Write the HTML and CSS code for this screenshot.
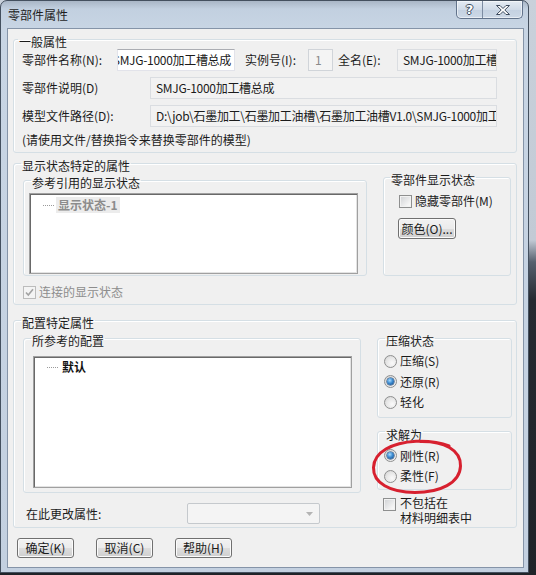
FILE: index.html
```html
<!DOCTYPE html>
<html lang="zh-CN">
<head>
<meta charset="utf-8">
<title>零部件属性</title>
<link rel="stylesheet" href="styles.css">
</head>
<body>
<div class="screen">
  <div class="win">
    <div class="titlebar">
      <span class="title">零部件属性</span>
      <div class="caps">
        <span class="cap cap-help">?</span>
        <span class="cap cap-close">
          <svg width="16" height="12" viewBox="0 0 16 12"><path d="M1.5 1.5h3.5l3 3 3-3h3.5l-4.7 4.5 4.7 4.5h-3.5l-3-3-3 3h-3.5l4.7-4.5z" fill="#fff" stroke="#3d4b5e" stroke-width="1" stroke-linejoin="round"/></svg>
        </span>
      </div>
    </div>
    <div class="client">
      <fieldset class="grp g1">
        <legend>一般属性</legend>
        <div class="row r1">
          <span class="lbl w-name">零部件名称(N):</span>
          <div class="tb tb-edit tb-name"><span>SMJG-1000加工槽总成</span></div>
          <span class="lbl w-inst">实例号(I):</span>
          <div class="tb tb-dis tb-inst">1</div>
          <span class="lbl w-full">全名(E):</span>
          <div class="tb tb-ro tb-flex">SMJG-1000加工槽总成</div>
        </div>
        <div class="row r2">
          <span class="lbl w-long">零部件说明(D)</span>
          <div class="tb tb-ro tb-flex">SMJG-1000加工槽总成</div>
        </div>
        <div class="row r3">
          <span class="lbl w-long">模型文件路径(D):</span>
          <div class="tb tb-ro tb-flex">D:\job\石墨加工\石墨加工油槽\石墨加工油槽V1.0\SMJG-1000加工槽总成.SLDASM</div>
        </div>
        <div class="note">(请使用文件/替换指令来替换零部件的模型)</div>
      </fieldset>

      <fieldset class="grp g2">
        <legend>显示状态特定的属性</legend>
        <div class="g2-cols">
          <fieldset class="sub sub-disp">
            <legend>参考引用的显示状态</legend>
            <div class="listbox lb-disp">
              <div class="tree-item"><span class="dots"></span><span class="item-text item-dis">显示状态-1</span></div>
            </div>
          </fieldset>
          <fieldset class="sub sub-comp">
            <legend>零部件显示状态</legend>
            <div class="opt">
              <span class="chk"></span><span>隐藏零部件(M)</span>
            </div>
            <button class="btn btn-color" type="button">颜色(O)...</button>
          </fieldset>
        </div>
        <div class="opt opt-link dis">
          <span class="chk chk-dis"><svg width="11" height="11" viewBox="0 0 11 11"><path d="M2 5.5l2.3 2.6L9 2.2" fill="none" stroke="#a3a3a3" stroke-width="1.6"/></svg></span><span>连接的显示状态</span>
        </div>
      </fieldset>

      <fieldset class="grp g3">
        <legend>配置特定属性</legend>
        <div class="g3-grid">
          <div class="g3-left">
            <fieldset class="sub sub-conf">
              <legend>所参考的配置</legend>
              <div class="listbox lb-conf">
                <div class="tree-item"><span class="dots"></span><span class="item-text item-bold">默认</span></div>
              </div>
            </fieldset>
            <div class="change-row">
              <span class="lbl w-change">在此更改属性:</span>
              <div class="combo"><svg width="7" height="4" viewBox="0 0 7 4"><path d="M0 0h7L3.5 4z" fill="#b4b4b4"/></svg></div>
            </div>
          </div>
          <div class="g3-right">
            <fieldset class="sub sub-supp">
              <legend>压缩状态</legend>
              <div class="opt rad-row"><span class="rad"></span><span>压缩(S)</span></div>
              <div class="opt rad-row"><span class="rad on"></span><span>还原(R)</span></div>
              <div class="opt rad-row"><span class="rad"></span><span>轻化</span></div>
            </fieldset>
            <fieldset class="sub sub-solve">
              <legend>求解为</legend>
              <div class="solve-opts">
                <div class="opt rad-row"><span class="rad on"></span><span>刚性(R)</span></div>
                <div class="opt rad-row"><span class="rad"></span><span>柔性(F)</span></div>
                <svg class="mark" width="96" height="58" viewBox="0 0 96 58"><path d="M50 3.5C74 3 91 12 90.5 28 90 45 70 54.5 45 54.5 20 54.5 3 45 3.5 29.5 4 14 22 4.5 46 3.2 60 2.8 72 5 79 8" fill="none" stroke="#d7202f" stroke-width="3" stroke-linecap="round"/></svg>
              </div>
            </fieldset>
            <div class="opt opt-bom">
              <span class="chk"></span><span class="bom-text">不包括在<br>材料明细表中</span>
            </div>
          </div>
        </div>
      </fieldset>

      <div class="btn-row">
        <button class="btn" type="button">确定(K)</button>
        <button class="btn" type="button">取消(C)</button>
        <button class="btn" type="button">帮助(H)</button>
      </div>
    </div>
  </div>
</div>
</body>
</html>
```

FILE: styles.css
```css
* { box-sizing: border-box; }
html, body { margin: 0; padding: 0; }
body {
  font-family: "Noto Sans CJK SC", "Microsoft YaHei", sans-serif;
  font-size: 12px;
  color: #1b1b1b;
  background: #22262c;
}
.screen {
  width: 536px;
  height: 575px;
  overflow: hidden;
  background: linear-gradient(to bottom, #c9d1db 0, #c2cad5 240px, #56606e 262px, #262a31 300px, #1f2328 100%);
}
.win {
  width: 529px;
  height: 573px;
  border: 1px solid #44505f;
  border-radius: 7px 7px 0 0;
  background: linear-gradient(to bottom, #a9b6c6 0, #c2d0e0 8px, #c8d5e4 28px, #c3d0e0 100%);
  padding: 0 4px 4px 6px;
  display: flex;
  flex-direction: column;
}
.titlebar {
  height: 27px;
  display: flex;
  align-items: flex-start;
}
.title {
  margin: 6px 0 0 1px;
  line-height: 16px;
  color: #1e1e1e;
}
.caps {
  margin-left: auto;
  margin-right: 1px;
  display: flex;
  height: 18px;
  border: 1px solid #62738b;
  border-top: none;
  border-radius: 0 0 5px 5px;
  background: linear-gradient(to bottom, #e4ebf3, #d0dbe8 50%, #c4d1e1 51%, #ccd8e6);
  box-shadow: inset 0 0 0 1px rgba(255,255,255,0.55);
  overflow: hidden;
}
.cap {
  display: flex;
  align-items: center;
  justify-content: center;
}
.cap-help {
  width: 26px;
  border-right: 1px solid #7d8ca2;
  font-family: "DejaVu Sans", sans-serif;
  font-weight: bold;
  font-size: 13px;
  line-height: 17px;
  color: #fff;
  text-shadow: 1px 0 0 #3d4b5e, -1px 0 0 #3d4b5e, 0 1px 0 #3d4b5e, 0 -1px 0 #3d4b5e;
}
.cap-close { width: 39px; }

.client {
  flex: 1;
  background: #f0f0f0;
  border: 1px solid #8594a8;
  padding: 0 6px 0 5px;
  display: flex;
  flex-direction: column;
}

fieldset {
  margin: 0;
  min-width: 0;
  border: 1px solid #d5dfe5;
  border-radius: 3px;
  box-shadow: inset 1px 1px 0 #fff;
}
legend {
  padding: 6px 1px 0;
  line-height: 14px;
}
.g1 { padding: 0 19px 4px 8px; }
.g1 > legend { margin-left: -4px; }
.row { display: flex; align-items: center; height: 22px; }
.r2, .r3 { margin-top: 6px; }
.lbl { white-space: nowrap; line-height: 16px; flex: none; }
.w-name { width: 95px; }
.w-inst { width: 63px; margin-left: 10px; }
.w-full { width: 59px; margin-left: 5px; }
.w-long { width: 128px; }
.w-change { width: 161px; }

.tb {
  height: 22px;
  line-height: 20px;
  white-space: nowrap;
  overflow: hidden;
  padding: 0 4px;
  flex: none;
  letter-spacing: -0.3px;
}
.tb-edit {
  background: #fff;
  border: 1px solid #e2e3ea;
  border-top-color: #abadb3;
  display: flex;
  justify-content: flex-end;
  padding: 0 3px 0 0;
}
.tb-edit span { flex: none; }
.tb-name { width: 118px; }
.tb-dis {
  background: #f4f4f4;
  border: 1px solid #d0d4d9;
  color: #8a8a8a;
  width: 25px;
  padding-left: 6px;
}
.tb-ro {
  background: #f2f2f2;
  border: 1px solid #dadde1;
}
.tb-flex { flex: 1; min-width: 0; padding-left: 5px; }
.note { margin-top: 5px; line-height: 16px; }

.g2 { padding: 0 4px 4px 9px; }
.g2 > legend, .g3 > legend { margin-left: -2px; }
.g2-cols { display: flex; align-items: flex-start; }
.sub-disp { width: 344px; margin-top: -3px; padding: 3px 8px 1px 5px; }
.sub-disp > legend { margin-left: 2px; }
.sub-comp { width: 128px; margin: -6px 0 0 16px; padding: 6px 4px 36px 15px; }
.sub-comp > legend { margin-left: -9px; }
.listbox {
  background: #fff;
  border: 1px solid #a0a0a0;
  box-shadow: inset 1px 1px 0 #696969, inset -1px -1px 0 #e3e3e3;
  padding: 3px 2px;
}
.lb-disp { height: 81px; }
.tree-item { display: flex; align-items: center; height: 16px; }
.dots {
  width: 11px;
  margin-left: 11px;
  margin-right: 2px;
  border-top: 1px dotted #9a9a9a;
}
.item-text { font-weight: bold; line-height: 16px; padding: 0 2px; }
.item-dis { color: #8c8c8c; background: #ececec; }
.item-bold { color: #111; }

.opt { display: flex; align-items: center; line-height: 16px; }
.chk {
  width: 13px;
  height: 13px;
  flex: none;
  margin-right: 3px;
  border: 1px solid #8e8f8f;
  background: linear-gradient(135deg, #cfd1d4, #f6f6f6 80%);
  box-shadow: inset 0 0 0 1px #f2f2f2;
  display: flex;
  align-items: center;
  justify-content: center;
}
.chk-dis {
  border-color: #bcbcbc;
  background: #f4f4f4;
  box-shadow: none;
}
.dis { color: #8d8d8d; }
.opt-link { margin-top: 8px; }

.btn {
  font-family: inherit;
  font-size: 12px;
  color: #1b1b1b;
  height: 21px;
  padding: 0;
  line-height: 17px;
  border: 1px solid #707070;
  border-radius: 3px;
  background: linear-gradient(to bottom, #f2f2f2 0%, #ebebeb 50%, #dddddd 51%, #cfcfcf 100%);
  box-shadow: inset 0 0 0 1px #fbfbfb;
}
.btn-color { width: 58px; margin: 9px 0 0 -1px; display: block; }

.g3 { margin-top: 5px; padding: 0 4px 2px 9px; }
.g3-grid { display: grid; grid-template-columns: 338px 135px; column-gap: 16px; align-items: start; }
.sub-conf { margin-top: -2px; padding: 8px 8px 4px 9px; }
.sub-conf > legend { margin-left: -2px; }
.lb-conf { height: 132px; padding-top: 2px; }
.change-row { display: flex; align-items: center; margin: 10px 0 0 3px; }
.combo {
  width: 133px;
  height: 21px;
  border: 1px solid #c5c9cd;
  border-radius: 2px;
  background: #f4f4f4;
  display: flex;
  align-items: center;
  justify-content: flex-end;
  padding-right: 6px;
}
.sub-supp { margin-top: -2px; padding: 3px 4px 4px 6px; }
.sub-supp > legend, .sub-solve > legend { margin-left: 1px; }
.rad-row { height: 20.5px; }
.rad {
  width: 13px;
  height: 13px;
  flex: none;
  margin-right: 3px;
  border-radius: 50%;
  border: 1px solid #8e8f8f;
  background: radial-gradient(circle at 65% 65%, #fafafa 0, #e6e6e6 55%, #cdcdcd 100%);
  display: flex;
  align-items: center;
  justify-content: center;
}
.rad.on::after {
  content: "";
  width: 7px;
  height: 7px;
  border-radius: 50%;
  background: radial-gradient(circle at 40% 35%, #a9dcff 0, #3c8bd0 45%, #123e78 100%);
  box-shadow: 0 0 0 0.5px #163a66;
}
.sub-solve { margin-top: 4px; padding: 4px 4px 2px 6px; }
.solve-opts { position: relative; }
.mark { position: absolute; left: -14px; top: -8px; pointer-events: none; }
.opt-bom { align-items: flex-start; margin: 5px 0 0 6px; }
.opt-bom .chk { margin-top: 3px; margin-right: 4px; }
.bom-text { line-height: 15px; }

.btn-row { display: flex; gap: 22px; margin: 10px 0 0 4px; }
.btn-row .btn { width: 57px; height: 20px; line-height: 16px; }
```
